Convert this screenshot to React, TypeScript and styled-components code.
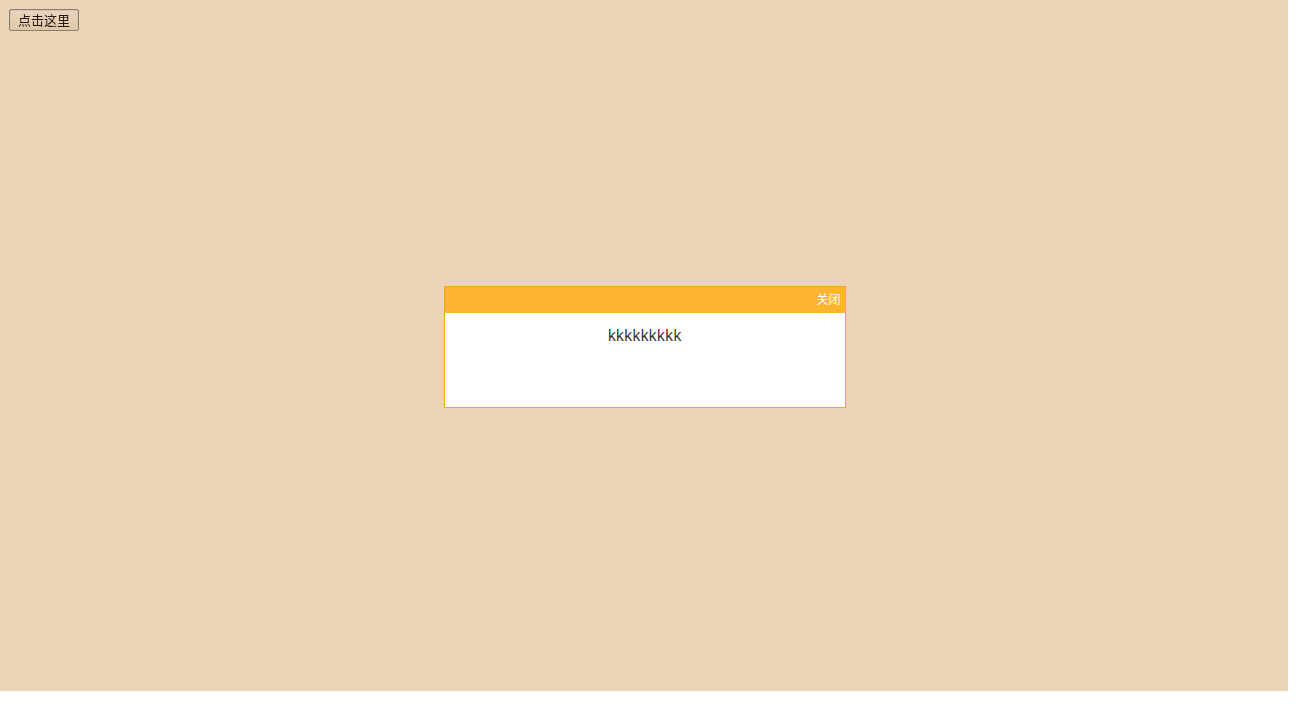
import React from "react";
import styled, { createGlobalStyle } from "styled-components";

const Global = createGlobalStyle`
  html, body { margin: 0; padding: 0; background: #ffffff; }
  body { font-family: "Liberation Sans", "Noto Sans CJK SC", sans-serif; }
  #root { padding: 9px; }
`;

const TriggerButton = styled.button`
  position: relative;
  z-index: 2;
  display: block;
  width: 70px;
  height: 22px;
  padding: 0;
  font-family: "Noto Sans CJK SC", sans-serif;
  font-size: 13px;
  line-height: 18px;
  color: #24180c;
  background: linear-gradient(#e9d6bd, #e0c8a9);
  border: 1px solid #85807a;
  box-shadow: inset 0 0 0 1px #d8c3a6;
  border-radius: 2px;
`;

const Overlay = styled.div`
  position: fixed;
  top: 0;
  left: 0;
  width: 1288px;
  height: 691px;
  background: rgba(215, 169, 107, 0.5);
  display: flex;
  align-items: flex-start;
  justify-content: center;
  padding-top: 286px;
  box-sizing: border-box;
`;

const Dialog = styled.div`
  width: 400px;
  height: 120px;
  margin-left: 1px;
  border: 1px solid #f2a915;
  background: #ffffff;
  display: flex;
  flex-direction: column;
`;

const Header = styled.div`
  height: 26px;
  background: #fdb52f;
  display: flex;
  align-items: center;
  justify-content: flex-end;
  padding-right: 4px;
`;

const Close = styled.span`
  color: #ffffff;
  font-family: "Noto Sans CJK SC", sans-serif;
  font-size: 12px;
  line-height: 24px;
  margin-bottom: 2px;
  cursor: pointer;
`;

const Body = styled.div`
  flex: 1;
  text-align: center;
  padding-top: 11px;
  font-family: "Open Sans", "Noto Sans", sans-serif;
  font-size: 15.6px;
  color: #2b2b33;
`;

export default function App() {
  return (
    <>
      <Global />
      <TriggerButton>点击这里</TriggerButton>
      <Overlay>
        <Dialog>
          <Header>
            <Close>关闭</Close>
          </Header>
          <Body>kkkkkkkkk</Body>
        </Dialog>
      </Overlay>
    </>
  );
}
